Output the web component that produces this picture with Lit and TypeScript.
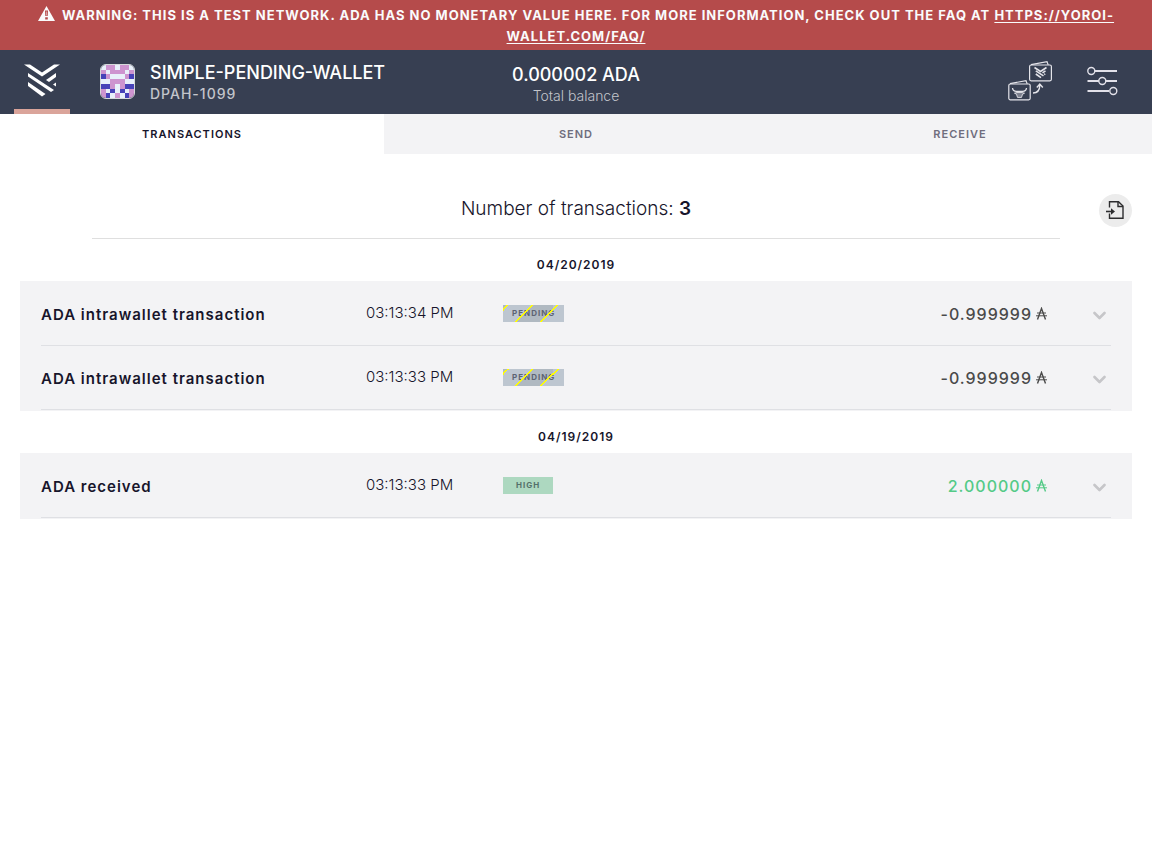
import { LitElement, html, css, svg } from "lit";
import { customElement, property } from "lit/decorators.js";

type Transaction = {
  title: string;
  time: string;
  status: "pending" | "high";
  amount: string;
};

type Group = { date: string; items: Transaction[] };

const GROUPS: Group[] = [
  {
    date: "04/20/2019",
    items: [
      { title: "ADA intrawallet transaction", time: "03:13:34 PM", status: "pending", amount: "-0.999999" },
      { title: "ADA intrawallet transaction", time: "03:13:33 PM", status: "pending", amount: "-0.999999" },
    ],
  },
  {
    date: "04/19/2019",
    items: [{ title: "ADA received", time: "03:13:33 PM", status: "high", amount: "2.000000" }],
  },
];

const PLATE = ["wppwppw", "pwpppwp", "bpwwwpb", "wwpppww", "bbpwpbb", "pwbwbwp", "pbwpwbp"];
const PLATE_COLORS: Record<string, string> = { w: "#e8f0fa", p: "#cd94cf", b: "#4742b8" };

const reset = css`
  *, *::before, *::after { box-sizing: border-box; }
  button {
    margin: 0;
    padding: 0;
    border: 0;
    background: none;
    color: inherit;
    font: inherit;
    letter-spacing: inherit;
    cursor: pointer;
  }
  svg { display: block; }
`;

@customElement("test-network-banner")
export class TestNetworkBanner extends LitElement {
  static styles = [reset, css`
    :host {
      display: block;
      padding: 5px 16px 3px;
      background: #b54b4b;
      color: #fafbfc;
      font-size: 13px;
      font-weight: 700;
      line-height: 21px;
      letter-spacing: 1px;
      text-align: center;
      text-transform: uppercase;
    }
    .icon { display: inline-block; width: 17px; height: 16px; margin-right: 7px; vertical-align: -2px; }
    a { color: inherit; text-underline-offset: 2px; }
  `];

  render() {
    return html`<svg class="icon" viewBox="0 0 17 16" aria-hidden="true">
        <path fill="#fafbfc" fill-rule="evenodd" d="M8.500 0 17 15H0ZM7 4.500 7.300 10H9.700L10 4.500ZM7.200 11.200v2.300h2.600v-2.300Z" />
        <path fill="#fafbfc" fill-opacity=".5" d="M8 5.500h1v4H8z" />
      </svg>Warning: This is a test network. ADA has no monetary value here. For more information, check out the FAQ at <a href="https://yoroi-wallet.com/faq/">https://yoroi-wallet.com/faq/</a>`;
  }
}

@customElement("top-bar")
export class TopBar extends LitElement {
  static styles = [reset, css`
    :host {
      display: grid;
      grid-template-columns: 1fr auto 1fr;
      height: 64px;
      background: #373f52;
      color: #fff;
    }
    .left { display: flex; }
    .home {
      display: flex;
      justify-content: center;
      width: 56px;
      margin-left: 14px;
      padding-top: 14px;
      border-bottom: 5px solid #daa49a;
    }
    .plate {
      width: 35px;
      height: 35px;
      margin: 14px 15px 0 30px;
      border: 1px solid #d5d9da;
      border-radius: 6px;
      overflow: hidden;
    }
    .plate svg { width: 100%; height: 100%; }
    .wallet { padding-top: 13px; white-space: nowrap; }
    .name { font-size: 18px; font-weight: 500; line-height: 20px; }
    .number { font-size: 14px; font-weight: 500; line-height: 22px; letter-spacing: 1px; color: #c3c5cb; }
    .balance { padding-top: 13px; text-align: center; }
    .sum { font-size: 18px; font-weight: 500; line-height: 24px; }
    .caption { font-size: 14px; font-weight: 300; line-height: 18px; color: #c3c5cb; }
    .right { display: flex; justify-content: flex-end; align-items: center; gap: 34px; padding: 0 34px 2px 0; }
  `];

  render() {
    return html`
      <div class="left">
        <button class="home" aria-label="Wallets">
          <svg width="36" height="33" viewBox="0 0 36 33" fill="#fff">
            <path d="M0 0.500H6L18 8.500 30 .5h6L18 12.500Z" />
            <path d="M4 9 30 26l-3 2L4 12.6Z" />
            <path d="M32 9v4l-7 5-3-2Z" />
            <path d="M4 18l17.5 12L18 32.4 4 22Z" />
            <path d="M32 18.6v4L29 20.6Z" />
          </svg>
        </button>
        <div class="plate">
          <svg viewBox="0 0 7 7" shape-rendering="crispEdges" aria-hidden="true">
            ${PLATE.map((row, y) =>
              [...row].map((c, x) => svg`<rect x=${x} y=${y} width="1" height="1" fill=${PLATE_COLORS[c]}></rect>`)
            )}
          </svg>
        </div>
        <div class="wallet">
          <div class="name">SIMPLE-PENDING-WALLET</div>
          <div class="number">DPAH-1099</div>
        </div>
      </div>
      <div class="balance">
        <div class="sum">0.000002 ADA</div>
        <div class="caption">Total balance</div>
      </div>
      <div class="right">
        <button aria-label="Transfer from Daedalus">
          <svg width="45" height="40" viewBox="0 0 45 40" fill="none" stroke="#e4e4ea" stroke-width="1.2">
            <rect x="21.600" y="4" width="21.800" height="15.800" rx="1.500" />
            <path d="M23 3.600 39 .700l1.200 3.200M2 22.600 18 19.700l1.200 3.200" />
            <rect x=".8" y="23" width="21.400" height="15.800" rx="1.500" />
            <g stroke-width="1.600">
              <path d="M26.500 6.500 32.500 10.500 38.500 6.500" />
              <path d="M27.800 9.800 35.500 14.800M37.500 9.800 34.500 11.800" />
              <path d="M27.800 13 33 16.600M37.200 12.800l-1 .7" />
            </g>
            <path d="M4.500 27c.3 2.500 2 3.300 3.800 3.300h6.400c1.800 0 3.500-.8 3.800-3.300" stroke-width="1.300" />
            <path d="M6.500 32.200l2.500-.7h5l2.500.7-2 1-1 3.200h-4l-1-3.200Z" fill="#e4e4ea" fill-opacity=".4" stroke-width=".9" />
            <path d="M25 32c4.500 0 6.800-2 6.800-8.300M28.800 26.500l3-3.500 3 3.500" stroke-width="1.400" />
          </svg>
        </button>
        <button aria-label="Settings">
          <svg width="31" height="30" viewBox="0 0 31 30" fill="none" stroke="#e2e1e9">
            <path d="M8 5H30M.5 15H12M19 15H30M.5 25H22" stroke-width="1.800" />
            <g stroke-width="1.400">
              <circle cx="4.300" cy="5" r="3.500" />
              <circle cx="15.300" cy="15" r="3.500" />
              <circle cx="26.300" cy="25" r="3.500" />
            </g>
          </svg>
        </button>
      </div>
    `;
  }
}

@customElement("wallet-tabs")
export class WalletTabs extends LitElement {
  static styles = [reset, css`
    :host { display: block; }
    nav { display: grid; grid-template-columns: repeat(3, 1fr); height: 40px; background: #f3f3f5; }
    button {
      font-size: 11px;
      font-weight: 600;
      letter-spacing: 1px;
      color: #6f6d7d;
    }
    .active { background: #fff; color: #17152b; }
  `];

  render() {
    return html`<nav>
      <button class="active" aria-current="page">TRANSACTIONS</button>
      <button>SEND</button>
      <button>RECEIVE</button>
    </nav>`;
  }
}

@customElement("transaction-row")
export class TransactionRow extends LitElement {
  @property({ attribute: false }) item!: Transaction;

  static styles = [reset, css`
    :host {
      display: grid;
      grid-template-columns: 325px 137px 1fr auto auto;
      height: 64px;
      padding-top: 23px;
      border-bottom: 1px solid #dfe0e4;
      align-items: start;
      color: #17152b;
    }
    .title { font-size: 15px; font-weight: 600; line-height: 20px; letter-spacing: 1px; }
    .time { font-size: 15px; font-weight: 300; line-height: 16px; }
    .status {
      position: relative;
      justify-self: start;
      height: 17px;
      padding: 0 9px;
      font-size: 8px;
      font-weight: 700;
      line-height: 17px;
      letter-spacing: 1px;
      color: #5d6473;
    }
    .pending {
      background: linear-gradient(135deg,
        #b0b9c1 5%, #bdc6d0 5% 30%, #b0b9c1 30% 55%, #bdc6d0 55%) 0 0 / 50px 50px no-repeat #bdc6d0;
    }
    .pending::after {
      content: "";
      position: absolute;
      inset: 0;
      background: linear-gradient(135deg,
        transparent 4%, #ffff00 4% 6%, transparent 6% 29%, #ffff00 29% 31%,
        transparent 31% 54%, #ffff00 54% 56%, transparent 56%) 0 0 / 50px 50px no-repeat,
        linear-gradient(135deg, transparent 4%, #ffff00 4% 6%, transparent 6%) 50px 0 / 50px 50px no-repeat;
    }
    .high { padding: 0 13px; background: #add8c0; color: #54706a; }
    .amount { display: flex; align-items: center; gap: 4px; font-size: 16px; font-weight: 500; line-height: 18px; letter-spacing: 1px; color: #4a4a4a; }
    .in { color: #54ca87; }
    .toggle { margin: 6px 5px 0 45px; }
  `];

  render() {
    const { title, time, status, amount } = this.item;
    const incoming = !amount.startsWith("-");
    return html`
      <div class="title">${title}</div>
      <div class="time">${time}</div>
      <div class="status ${status}">${status.toUpperCase()}</div>
      <div class="amount ${incoming ? "in" : ""}">
        <span>${amount}</span>
        <svg width="12" height="14" viewBox="0 0 12 14" fill="none" stroke="currentColor" role="img" aria-label="ADA">
          <path d="M1.500 12.500 5.500 1.500 9.500 12.500" stroke-width="1.400" />
          <path d="M1 6H10M0 8.800H11" stroke-width="1" />
        </svg>
      </div>
      <button class="toggle" aria-label="Show details">
        <svg width="13" height="9" viewBox="0 0 13 9" fill="none" stroke="#c6c6c9" stroke-width="2.600" stroke-linecap="round" stroke-linejoin="round">
          <path d="M1.500 2 6.500 7 11.500 2" />
        </svg>
      </button>
    `;
  }
}

@customElement("app-root")
export class AppRoot extends LitElement {
  static styles = [reset, css`
    :host {
      display: block;
      min-height: 100vh;
      background: #fff;
      color: #17152b;
      font-family: Inter, "Liberation Sans", sans-serif;
    }
    main { padding: 40px 20px; }
    .summary {
      display: grid;
      grid-template-columns: 72px 1fr 72px;
      height: 45px;
    }
    h1 {
      grid-column: 2;
      margin: 0;
      border-bottom: 1px solid #dfdfdf;
      font-size: 19px;
      font-weight: 300;
      line-height: 30px;
      text-align: center;
    }
    strong { font-weight: 600; }
    .export {
      display: grid;
      place-items: center;
      justify-self: end;
      width: 33px;
      height: 33px;
      padding: 0 1px 1px 0;
      border-radius: 50%;
      background: #ececec;
    }
    h2 {
      margin: 0;
      font-size: 12px;
      font-weight: 600;
      line-height: 18px;
      letter-spacing: 1px;
      text-align: center;
      padding: 17px 0 7px;
    }
    .list { padding: 1px 21px; background: #f3f3f5; }
  `];

  render() {
    return html`
      <test-network-banner></test-network-banner>
      <top-bar></top-bar>
      <wallet-tabs></wallet-tabs>
      <main>
        <div class="summary">
          <h1>Number of transactions: <strong>3</strong></h1>
          <button class="export" aria-label="Export transactions">
            <svg width="19" height="18" viewBox="0 0 19 18" fill="none" stroke="#2d2d2f" stroke-width="1.400">
              <path d="M3.500 6.500V.700H12.500L17 5V17.300H3.500V12.500" />
              <path d="M12 .700V5.500H17" />
              <path d="M0 10.500H7" stroke-width="1.600" />
              <path d="M5 7.300 9 10.500 5 13.700Z" fill="#2d2d2f" stroke="none" />
            </svg>
          </button>
        </div>
        ${GROUPS.map(
          (g) => html`
            <section>
              <h2>${g.date}</h2>
              <div class="list">
                ${g.items.map((item) => html`<transaction-row .item=${item}></transaction-row>`)}
              </div>
            </section>
          `
        )}
      </main>
    `;
  }
}
